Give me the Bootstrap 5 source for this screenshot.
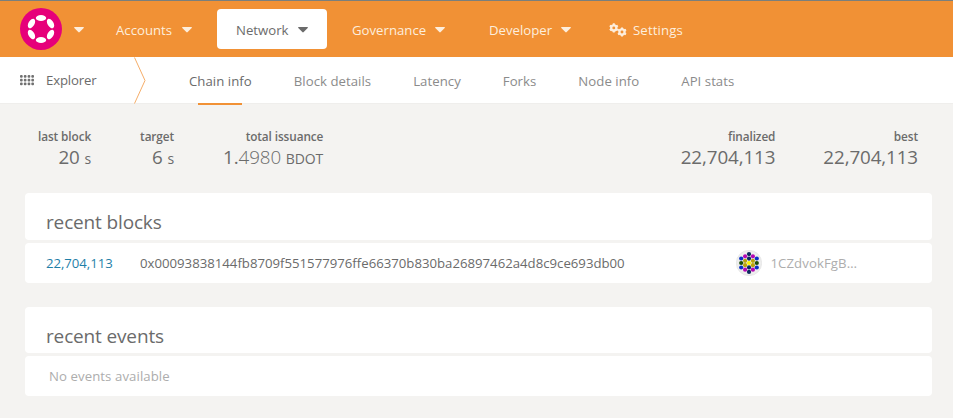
<!DOCTYPE html>
<html lang="en">
<head>
<meta charset="utf-8">
<title>Explorer</title>
<link rel="stylesheet" href="https://cdn.jsdelivr.net/npm/bootstrap@5.3.0/dist/css/bootstrap.min.css">
<style>
body{width:953px;height:418px;overflow:hidden;background:#f4f3f1;color:#6b6b6b;font-family:"Open Sans","Noto Sans",sans-serif;font-size:13.2px;line-height:20px;letter-spacing:0}
svg{display:block;flex:none}
.topbar{height:57px;background:#f19135;border-top:1px solid #7b7f7c;padding-left:20px;color:#fdeedd}
.menu-list{gap:6px;margin-left:8px}
.menu-item{height:40px;padding:2px 19px 0;color:inherit;border-radius:4px;white-space:nowrap}
.menu-item.current{background:#fff;color:#6b6b6b}
.w-acc{width:114px}.w-net{width:110px}.w-gov{width:131px}.w-dev{width:120px}
.menu-item.settings{padding-left:13px;padding-top:1px;gap:6px;letter-spacing:.12px}
.subbar{height:47px;background:#fff;border-bottom:1px solid #efeeec}
.section-name{width:114px;padding-left:20px;gap:12px;letter-spacing:-.15px}
.tabs{gap:42px;margin-left:39px;letter-spacing:.04px}
.tab-link{height:48px;color:#8b8b8b;white-space:nowrap}
.tab-link.current{color:#6b6b6b;position:relative}
.tab-link.current::after{content:"";position:absolute;left:9px;width:44px;bottom:0;height:2px;background:#f19135}
.summary{height:89px;padding:22px 35px 0 38px;text-align:right}
.stat-name{font-size:11.8px;font-weight:600;line-height:20px;letter-spacing:-.1px}
.stat-value{font-size:18.8px;line-height:22px;letter-spacing:-.1px;font-weight:400}
.stat-value .unit{font-size:14px}
.stat-value .frac{font-weight:300}
.stats-left{gap:49px}
.panel{margin:0 21px 24px 25px}
.panel-head{height:47px;background:#fff;border-radius:4px;padding:15px 21px 0;font-size:19px;line-height:28px;font-weight:400;letter-spacing:-.15px;margin:0 0 3px}
.panel-head.short{height:46px}
.panel-row{height:40px;background:#fff;border-radius:4px}
.block-row{padding:0 75px 0 21px}
.blocknum{width:94px;color:#1f7fa8;text-decoration:none;letter-spacing:-.05px}
.faint{color:#adadad;letter-spacing:.08px}
</style>
<script src="https://cdn.jsdelivr.net/npm/bootstrap@5.3.0/dist/js/bootstrap.bundle.min.js"></script>
</head>
<body>
<svg width="0" height="0" class="position-absolute">
<defs>
<path id="caret" d="M.7 0h8.6q1 .2.4 1L5.7 5.100q-.7.6-1.400 0L.3 1Q-.3.200.7 0Z"/>
<g id="gear"><circle r="2.600" fill="none" stroke="currentColor" stroke-width="2.300"/><path d="M0-4.600V-3M0 3V4.600M-4-2.300-2.600-1.500M2.600 1.500 4 2.300M-4 2.300-2.600 1.500M2.600-1.500 4-2.300" stroke="currentColor" stroke-width="2"/></g>
</defs>
</svg>
<header class="topbar d-flex align-items-center">
  <svg width="42" height="42" viewBox="-21 -21 42 42"><circle r="21" fill="#e6007a"/><g fill="#fff"><ellipse cy="-11" rx="5.200" ry="3"/><ellipse cy="11" rx="5.200" ry="3"/><ellipse cy="-11" rx="5.200" ry="3" transform="rotate(60)"/><ellipse cy="-11" rx="5.200" ry="3" transform="rotate(120)"/><ellipse cy="-11" rx="5.200" ry="3" transform="rotate(240)"/><ellipse cy="-11" rx="5.200" ry="3" transform="rotate(300)"/></g></svg>
  <svg class="ms-2" width="19" height="8" viewBox="-4 -2 19 8" fill="currentColor"><use href="#caret"/></svg>
  <nav class="menu-list d-flex">
    <a class="menu-item w-acc d-flex align-items-center justify-content-between text-decoration-none" href="#">Accounts<svg width="10" height="6" fill="currentColor"><use href="#caret"/></svg></a>
    <a class="menu-item current w-net d-flex align-items-center justify-content-between text-decoration-none" href="#">Network<svg width="10" height="6" fill="currentColor"><use href="#caret"/></svg></a>
    <a class="menu-item w-gov d-flex align-items-center justify-content-between text-decoration-none" href="#">Governance<svg width="10" height="6" fill="currentColor"><use href="#caret"/></svg></a>
    <a class="menu-item w-dev d-flex align-items-center justify-content-between text-decoration-none" href="#">Developer<svg width="10" height="6" fill="currentColor"><use href="#caret"/></svg></a>
    <a class="menu-item settings d-flex align-items-center text-decoration-none" href="#"><svg width="18" height="14"><use href="#gear" x="4.800" y="4.900"/><use href="#gear" x="13" y="9"/></svg>Settings</a>
  </nav>
</header>
<div class="subbar d-flex">
  <div class="section-name d-flex align-items-center"><svg width="14" height="11" fill="#707070"><g id="dots"><rect width="2.700" height="2.700" rx="1"/><rect x="3.800" width="2.700" height="2.700" rx="1"/><rect x="7.600" width="2.700" height="2.700" rx="1"/><rect x="11.300" width="2.700" height="2.700" rx="1"/></g><use href="#dots" y="3.800"/><use href="#dots" y="7.600"/></svg>Explorer</div>
  <svg class="ms-3 ps-1" width="20" height="47" fill="none" stroke="#f5ad69"><path d="M.5.500 11 23.500.5 46.500"/></svg>
  <nav class="tabs d-flex">
    <a class="tab-link current d-flex align-items-center text-decoration-none" href="#">Chain info</a>
    <a class="tab-link d-flex align-items-center text-decoration-none" href="#">Block details</a>
    <a class="tab-link d-flex align-items-center text-decoration-none" href="#">Latency</a>
    <a class="tab-link d-flex align-items-center text-decoration-none" href="#">Forks</a>
    <a class="tab-link d-flex align-items-center text-decoration-none" href="#">Node info</a>
    <a class="tab-link d-flex align-items-center text-decoration-none" href="#">API stats</a>
  </nav>
</div>
<main>
  <section class="summary d-flex justify-content-between">
    <div class="stats-left d-flex">
      <div><div class="stat-name">last block</div><div class="stat-value">20 <span class="unit">s</span></div></div>
      <div><div class="stat-name">target</div><div class="stat-value">6 <span class="unit">s</span></div></div>
      <div><div class="stat-name">total issuance</div><div class="stat-value">1.<span class="frac">4980</span> <span class="unit">BDOT</span></div></div>
    </div>
    <div class="d-flex gap-5">
      <div><div class="stat-name">finalized</div><div class="stat-value">22,704,113</div></div>
      <div><div class="stat-name">best</div><div class="stat-value">22,704,113</div></div>
    </div>
  </section>
  <section class="panel">
    <h1 class="panel-head">recent blocks</h1>
    <div class="panel-row block-row d-flex align-items-center">
      <a class="blocknum" href="#">22,704,113</a><span>0x00093838144fb8709f551577976ffe66370b830ba26897462a4d8c9ce693db00</span>
      <div class="d-flex align-items-center faint ms-auto"><svg width="26" height="26" viewBox="-13 -13 26 26"><circle r="12.700" fill="#eee" stroke="#ddd" stroke-width=".5"/>
      <g fill="#0c2860"><circle cy="-8.900" r="2.100"/><circle cy="-4.400" r="2.100"/><circle cy="4.400" r="2.100"/><circle cy="8.900" r="2.100"/></g>
      <g fill="#b408b4"><circle cx="-3.900" cy="-6.700" r="2.100"/><circle cx="3.900" cy="-6.700" r="2.100"/><circle cx="-3.900" cy="6.700" r="2.100"/><circle cx="3.900" cy="6.700" r="2.100"/></g>
      <g fill="#0b31c4"><circle cx="-7.800" cy="-4.500" r="2.100"/><circle cx="7.800" cy="-4.500" r="2.100"/><circle cx="-7.800" cy="4.500" r="2.100"/><circle cx="7.800" cy="4.500" r="2.100"/></g>
      <g fill="#b9a30c"><circle cx="-3.900" cy="-2.200" r="2.100"/><circle cx="3.900" cy="-2.200" r="2.100"/><circle cx="-3.900" cy="2.200" r="2.100"/><circle cx="3.900" cy="2.200" r="2.100"/></g>
      <circle cx="-7.800" r="2.100" fill="#1d5008"/><circle cx="7.800" r="2.100" fill="#1d5008"/><circle r="2.100" fill="#fbf200"/></svg><span class="ms-2">1CZdvokFgB…</span></div>
    </div>
  </section>
  <section class="panel">
    <h1 class="panel-head short">recent events</h1>
    <div class="panel-row d-flex align-items-center px-4 faint">No events available</div>
  </section>
</main>
</body>
</html>
